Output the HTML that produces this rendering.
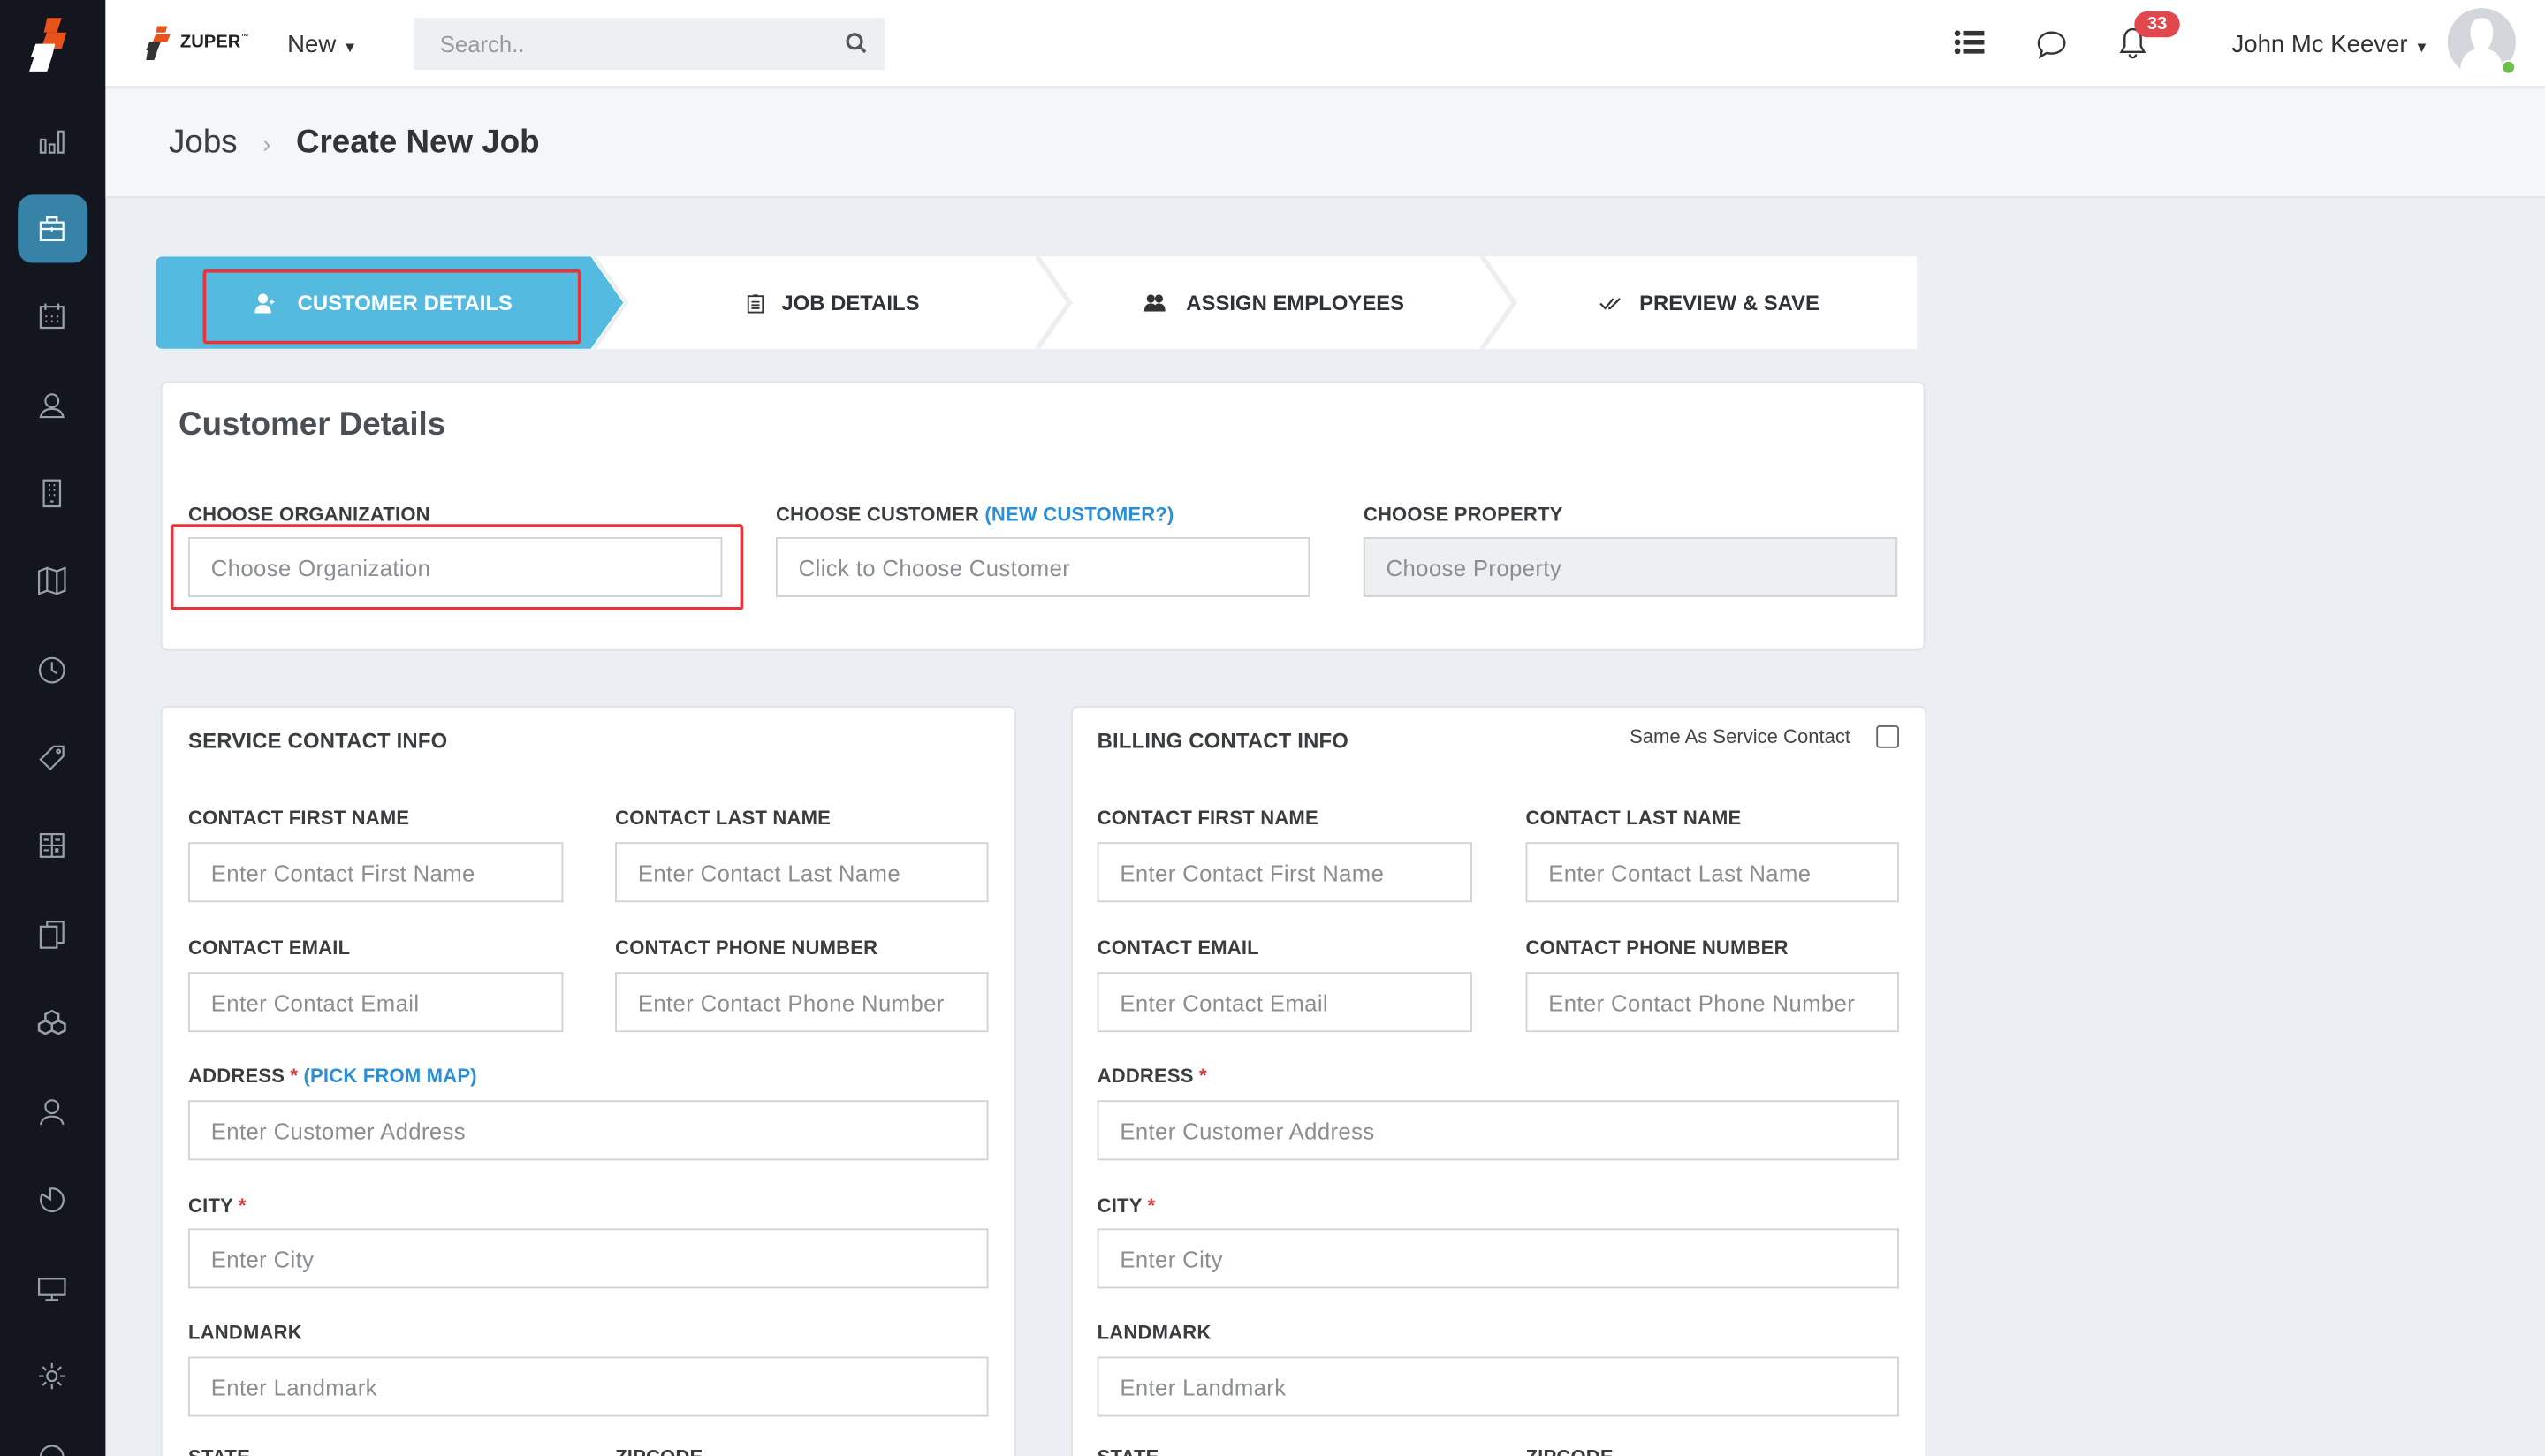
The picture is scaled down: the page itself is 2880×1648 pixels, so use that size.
<!DOCTYPE html>
<html><head><meta charset="utf-8"><style>
*{box-sizing:border-box;margin:0;padding:0}
html,body{width:2880px;height:1648px;overflow:hidden;background:#ebeef2}
#w{width:1568px;height:898px;transform:scale(1.836735);transform-origin:0 0;position:relative;font-family:"Liberation Sans",sans-serif;color:#333;background:#ebeef2}
.a{position:absolute}
#sb{left:0;top:0;width:65px;height:898px;background:#13151f}
.ic{position:absolute;left:22px;width:20px;height:20px}
#top{left:65px;top:0;width:1503px;height:54px;background:#fff;border-bottom:1px solid #dcdfe2}
#bc{left:65px;top:55px;width:1503px;height:67px;background:#f5f6f7;border-bottom:1px solid #dfe3e6}
.lbl{position:absolute;font-size:12px;font-weight:bold;color:#3a3d40;letter-spacing:.1px}
.in{position:absolute;height:37px;border:1px solid #cfd3d6;background:#fff;font-size:14px;color:#8a8e92;padding:10px 13px;letter-spacing:.2px}
.card{position:absolute;background:#fff;border:1px solid #e0e3e6;border-radius:4px}
.req{color:#e0393e}
.lnk{color:#2a8fd6}
.step{position:absolute;top:158px;height:57px;font-size:13px;font-weight:bold;color:#2f3337;display:flex;align-items:center;justify-content:center}
</style></head><body><div id="w">
<div id="sb" class="a">
 <svg class="a" style="left:15px;top:9px" width="36" height="36" viewBox="0 0 36 36"><path d="M14 2h9l-3 9h-8z" fill="#e8531c"/><path d="M14 11h12l-3 10H10z" fill="#e8531c"/><path d="M7 18h12l-2 8H4z" fill="#fff"/><path d="M6 26h11l-3 9H3z" fill="#fff"/></svg>
 <div class="a" style="left:11px;top:120px;width:43px;height:42px;background:#3783a8;border-radius:9px"></div>
 <svg class="ic" style="top:77px" viewBox="0 0 20 20" fill="none" stroke="#9aa0a8" stroke-width="1.2"><rect x="3" y="9" width="3" height="8"/><rect x="8.5" y="12" width="3" height="5"/><rect x="14" y="4" width="3" height="13"/></svg>
 <svg class="ic" style="top:131px" viewBox="0 0 20 20" fill="none" stroke="#fff" stroke-width="1.2"><rect x="3" y="6" width="14" height="11"/><path d="M7 6V3h6v3M3 10h14M10 9v3"/></svg>
 <svg class="ic" style="top:185px" viewBox="0 0 20 20" fill="none" stroke="#9aa0a8" stroke-width="1.2"><rect x="3" y="4" width="14" height="13"/><path d="M6 2v4M14 2v4M6 10h1M9.5 10h1M13 10h1M6 13h1M9.5 13h1M13 13h1"/></svg>
 <svg class="ic" style="top:240px" viewBox="0 0 20 20" fill="none" stroke="#9aa0a8" stroke-width="1.2"><circle cx="10" cy="7" r="4"/><path d="M3 17c1-4 4-5 7-5s6 1 7 5z"/></svg>
 <svg class="ic" style="top:294px" viewBox="0 0 20 20" fill="none" stroke="#9aa0a8" stroke-width="1.2"><rect x="5" y="2" width="10" height="16"/><path d="M8 5h1M11 5h1M8 8h1M11 8h1M8 11h1M11 11h1M9 15h2"/></svg>
 <svg class="ic" style="top:348px" viewBox="0 0 20 20" fill="none" stroke="#9aa0a8" stroke-width="1.2"><path d="M2 4l5-2 6 2 5-2v14l-5 2-6-2-5 2zM7 2v14M13 4v14"/></svg>
 <svg class="ic" style="top:403px" viewBox="0 0 20 20" fill="none" stroke="#9aa0a8" stroke-width="1.2"><circle cx="10" cy="10" r="7.5"/><path d="M10 5v5l3 2"/></svg>
 <svg class="ic" style="top:457px" viewBox="0 0 20 20" fill="none" stroke="#9aa0a8" stroke-width="1.2"><path d="M11 3h6v6l-8 8-6-6z"/><circle cx="14" cy="6" r="1"/></svg>
 <svg class="ic" style="top:511px" viewBox="0 0 20 20" fill="none" stroke="#9aa0a8" stroke-width="1.2"><rect x="3" y="3" width="14" height="14"/><path d="M3 10h14M10 3v14M5 6.5h3M12 6.5h3M5 13h3M12 12l2 2M14 12l-2 2"/></svg>
 <svg class="ic" style="top:566px" viewBox="0 0 20 20" fill="none" stroke="#9aa0a8" stroke-width="1.2"><rect x="3" y="5" width="10" height="13"/><path d="M7 5V2h10v13h-4"/></svg>
 <svg class="ic" style="top:621px" viewBox="0 0 20 20" fill="none" stroke="#9aa0a8" stroke-width="1.4"><path d="M6 4l4-2 4 2v4l-4 2-4-2zM2 10l4-2 4 2v4l-4 2-4-2zM10 10l4-2 4 2v4l-4 2-4-2z"/></svg>
 <svg class="ic" style="top:675px" viewBox="0 0 20 20" fill="none" stroke="#9aa0a8" stroke-width="1.2"><circle cx="10" cy="7" r="4"/><path d="M3 18c1-4 4-5 7-5s6 1 7 5"/></svg>
 <svg class="ic" style="top:730px" viewBox="0 0 20 20" fill="none" stroke="#9aa0a8" stroke-width="1.2"><path d="M4 6a7 7 0 1 0 5-3.5V9z"/></svg>
 <svg class="ic" style="top:784px" viewBox="0 0 20 20" fill="none" stroke="#9aa0a8" stroke-width="1.2"><rect x="2" y="4" width="16" height="10"/><path d="M10 14v3M6 17h8"/></svg>
 <svg class="ic" style="top:838px" viewBox="0 0 20 20" fill="none" stroke="#9aa0a8" stroke-width="1.2"><circle cx="10" cy="10" r="3"/><path d="M10 2v3M10 15v3M2 10h3M15 10h3M4.3 4.3l2.1 2.1M13.6 13.6l2.1 2.1M4.3 15.7l2.1-2.1M13.6 6.4l2.1-2.1"/></svg>
 <svg class="ic" style="top:888px" viewBox="0 0 20 20" fill="none" stroke="#9aa0a8" stroke-width="1.2"><circle cx="10" cy="10" r="7"/></svg>
</div>
<div id="top" class="a">
 <svg class="a" style="left:24px;top:16px" width="22" height="21" viewBox="0 0 22 21"><path d="M8 0h6l-1 4H7z" fill="#e8531c"/><path d="M7 5h9l-2 5H5z" fill="#e8531c"/><path d="M3 10h7l-2 5H1z" fill="#333"/><path d="M2 15h6l-2 6H1z" fill="#333"/></svg>
 <div class="a" style="left:46px;top:20px;font-size:11px;font-weight:bold;color:#222">ZUPER<sup style="font-size:5px">™</sup></div>
 <div class="a" style="left:112px;top:19px;font-size:15px;color:#333">New <span style="font-size:9px">▼</span></div>
 <div class="a" style="left:190px;top:11px;width:290px;height:32px;background:#edf0f2;font-size:14px;color:#999;padding:8px 16px">Search..
  <svg class="a" style="left:266px;top:9px" width="13" height="13" viewBox="0 0 13 13" fill="none" stroke="#555" stroke-width="1.8"><circle cx="5.5" cy="5.5" r="4.3"/><path d="M8.6 8.6l3.5 3.5"/></svg></div>
 <svg class="a" style="left:1139px;top:18px" width="19" height="16" viewBox="0 0 19 16" fill="#333"><circle cx="2" cy="2.5" r="1.8"/><circle cx="2" cy="8" r="1.8"/><circle cx="2" cy="13.5" r="1.8"/><rect x="5.5" y="1" width="13" height="3"/><rect x="5.5" y="6.5" width="13" height="3"/><rect x="5.5" y="12" width="13" height="3"/></svg>
 <svg class="a" style="left:1189px;top:18px" width="20" height="20" viewBox="0 0 20 20" fill="none" stroke="#333" stroke-width="1.3"><path d="M10 2c4.5 0 8 2.8 8 6.5S14.5 15 10 15c-1 0-2-.1-3-.4L3 17l1-3.5C2.8 12.3 2 10.5 2 8.5 2 4.8 5.5 2 10 2z"/></svg>
 <svg class="a" style="left:1240px;top:16px" width="18" height="22" viewBox="0 0 18 22" fill="none" stroke="#333" stroke-width="1.3"><path d="M9 2c-3 0-5 2.5-5 5.5v5L2 16h14l-2-3.5v-5C14 4.5 12 2 9 2zM7 17.5a2 2 0 0 0 4 0"/></svg>
 <div class="a" style="left:1250px;top:7px;width:28px;height:16px;background:#e2474d;border-radius:8px;color:#fff;font-size:11px;font-weight:bold;text-align:center;line-height:16px">33</div>
 <div class="a" style="left:1310px;top:19px;font-size:15px;color:#333">John Mc Keever <span style="font-size:9px">▼</span></div>
 <div class="a" style="left:1443px;top:5px;width:42px;height:42px;border-radius:50%;background:#d3d6da;overflow:hidden"><svg width="42" height="42" viewBox="0 0 42 42"><path d="M21 6c5 0 7 4 7 9s-2 8-3 10c4 2 7 3 9 10v7H8v-7c2-7 5-8 9-10-1-2-3-5-3-10s2-9 7-9z" fill="#fff"/></svg></div>
 <div class="a" style="left:1476px;top:37px;width:9px;height:9px;border-radius:50%;background:#6cc04a;border:1.5px solid #fff"></div>
</div>
<div id="bc" class="a">
 <div class="a" style="left:39px;top:22px;font-size:20px;color:#3a3e42">Jobs <span style="color:#aaa;font-size:15px;margin:0 10px">›</span> <b style="color:#2f3438">Create New Job</b></div>
</div>
<div class="a" style="left:96px;top:158px;width:1085px;height:57px;background:#fff"></div>
<svg class="a" style="left:96px;top:158px" width="1085" height="57"><path d="M0 4a4 4 0 0 1 4-4h264l20 28.5L268 57H4a4 4 0 0 1-4-4z" fill="#55bae0"/><path d="M543 0l20 28.5L543 57M817 0l20 28.5L817 57" fill="none" stroke="#eceef0" stroke-width="3"/><path d="M270 0l20 28.5L270 57" fill="none" stroke="#eceef0" stroke-width="2"/></svg>
<div class="a" style="left:125px;top:166px;width:233px;height:46px;border:2px solid #e3353b;border-radius:2px"></div>
<div class="step" style="left:125px;width:233px;color:#fff;padding-right:10px">
 <svg width="12" height="12" viewBox="0 0 12 12" fill="#fff" style="margin-right:14px"><circle cx="5" cy="3" r="3"/><path d="M0 12c0-4 2-5 5-5s5 1 5 5z"/><path d="M9 5h3M10.5 3.5v3" stroke="#fff"/></svg>CUSTOMER DETAILS</div>
<div class="step" style="left:385px;width:256px"><svg width="11" height="12" viewBox="0 0 11 12" fill="none" stroke="#333" style="margin-right:11px"><rect x="1" y="1.5" width="9" height="10"/><path d="M3 5h5M3 7h5M3 9h5M4 1h3"/></svg>JOB DETAILS</div>
<div class="step" style="left:655px;width:260px"><svg width="13" height="11" viewBox="0 0 13 11" fill="#333" style="margin-right:13px"><circle cx="4" cy="3" r="2.5"/><circle cx="9" cy="3" r="2.5"/><path d="M0 11c0-4 2-5 4-5s4 1 4 5zM6 11c0-4 1-5 3-5s4 1 4 5z"/></svg>ASSIGN EMPLOYEES</div>
<div class="step" style="left:925px;width:256px"><svg width="14" height="10" viewBox="0 0 14 10" fill="none" stroke="#333" stroke-width="1.2" style="margin-right:11px"><path d="M1 5l3 3 5-6M6 8l1 0 6-6"/></svg>PREVIEW &amp; SAVE</div>

<div class="card" style="left:99px;top:235px;width:1087px;height:166px"></div>
<div class="a" style="left:110px;top:251px;font-size:20px;font-weight:bold;color:#4a4f55">Customer Details</div>
<div class="lbl" style="left:116px;top:310px">CHOOSE ORGANIZATION</div>
<div class="lbl" style="left:478px;top:310px">CHOOSE CUSTOMER <span class="lnk">(NEW CUSTOMER?)</span></div>
<div class="lbl" style="left:840px;top:310px">CHOOSE PROPERTY</div>
<div class="in" style="left:116px;top:331px;width:329px">Choose Organization</div>
<div class="in" style="left:478px;top:331px;width:329px">Click to Choose Customer</div>
<div class="in" style="left:840px;top:331px;width:329px;background:#eeeff0">Choose Property</div>
<div class="a" style="left:105px;top:323px;width:353px;height:53px;border:2px solid #e3353b;border-radius:2px"></div>

<div class="card" style="left:99px;top:435px;width:527px;height:480px"></div>
<div class="card" style="left:660px;top:435px;width:527px;height:480px"></div>
<div class="lbl" style="left:116px;top:449px;font-size:13px">SERVICE CONTACT INFO</div>
<div class="lbl" style="left:676px;top:449px;font-size:13px">BILLING CONTACT INFO</div>
<div class="a" style="left:1004px;top:447px;font-size:12px;color:#444">Same As Service Contact</div>
<div class="a" style="left:1156px;top:447px;width:14px;height:14px;border:1.5px solid #666;border-radius:2px"></div>

<div class="lbl" style="left:116px;top:497px">CONTACT FIRST NAME</div>
<div class="lbl" style="left:379px;top:497px">CONTACT LAST NAME</div>
<div class="in" style="left:116px;top:519px;width:231px">Enter Contact First Name</div>
<div class="in" style="left:379px;top:519px;width:230px">Enter Contact Last Name</div>
<div class="lbl" style="left:116px;top:577px">CONTACT EMAIL</div>
<div class="lbl" style="left:379px;top:577px">CONTACT PHONE NUMBER</div>
<div class="in" style="left:116px;top:599px;width:231px">Enter Contact Email</div>
<div class="in" style="left:379px;top:599px;width:230px">Enter Contact Phone Number</div>
<div class="lbl" style="left:116px;top:656px">ADDRESS <span class="req">*</span> <span class="lnk">(PICK FROM MAP)</span></div>
<div class="in" style="left:116px;top:678px;width:493px">Enter Customer Address</div>
<div class="lbl" style="left:116px;top:736px">CITY <span class="req">*</span></div>
<div class="in" style="left:116px;top:757px;width:493px">Enter City</div>
<div class="lbl" style="left:116px;top:814px">LANDMARK</div>
<div class="in" style="left:116px;top:836px;width:493px">Enter Landmark</div>
<div class="lbl" style="left:116px;top:891px">STATE</div>
<div class="lbl" style="left:379px;top:891px">ZIPCODE</div>

<div class="lbl" style="left:676px;top:497px">CONTACT FIRST NAME</div>
<div class="lbl" style="left:940px;top:497px">CONTACT LAST NAME</div>
<div class="in" style="left:676px;top:519px;width:231px">Enter Contact First Name</div>
<div class="in" style="left:940px;top:519px;width:230px">Enter Contact Last Name</div>
<div class="lbl" style="left:676px;top:577px">CONTACT EMAIL</div>
<div class="lbl" style="left:940px;top:577px">CONTACT PHONE NUMBER</div>
<div class="in" style="left:676px;top:599px;width:231px">Enter Contact Email</div>
<div class="in" style="left:940px;top:599px;width:230px">Enter Contact Phone Number</div>
<div class="lbl" style="left:676px;top:656px">ADDRESS <span class="req">*</span></div>
<div class="in" style="left:676px;top:678px;width:494px">Enter Customer Address</div>
<div class="lbl" style="left:676px;top:736px">CITY <span class="req">*</span></div>
<div class="in" style="left:676px;top:757px;width:494px">Enter City</div>
<div class="lbl" style="left:676px;top:814px">LANDMARK</div>
<div class="in" style="left:676px;top:836px;width:494px">Enter Landmark</div>
<div class="lbl" style="left:676px;top:891px">STATE</div>
<div class="lbl" style="left:940px;top:891px">ZIPCODE</div>
</div></body></html>
